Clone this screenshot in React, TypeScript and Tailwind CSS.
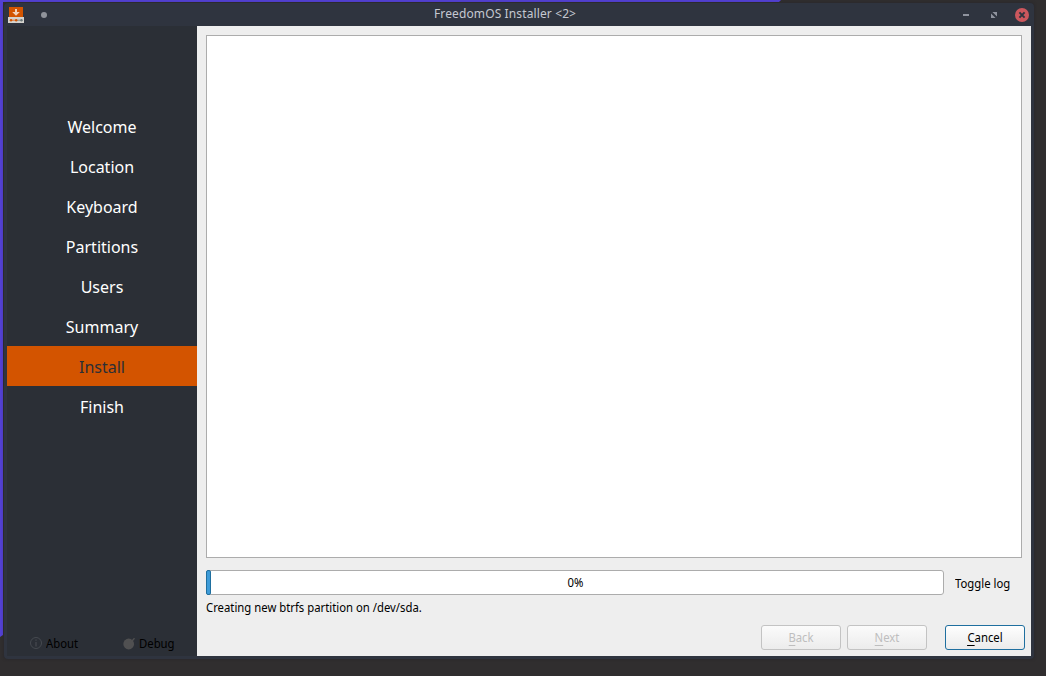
const steps = ['Welcome', 'Location', 'Keyboard', 'Partitions', 'Users', 'Summary', 'Install', 'Finish'];

function InstallerIcon() {
  return (
    <svg className="ml-[4px] mt-[4px] block shrink-0" width="16" height="16" viewBox="0 0 16 16">
      <rect x="1" y="0" width="14" height="11" fill="#d35400" />
      <path d="M7 2h2v3h2.8L8 8.8 4.2 5H7z" fill="#f3d3ba" />
      <rect x="0" y="10" width="16" height="6" fill="#d5d3ce" />
      <path d="M2 13.2h7" stroke="#dd7433" strokeWidth="1" />
      <path d="M9 13.2h5" stroke="#7f8c8d" strokeWidth="1" />
      <circle cx="3" cy="13.2" r="1.2" fill="#d35400" />
      <circle cx="8.2" cy="13.2" r="1.2" fill="#d35400" />
      <circle cx="13.5" cy="13.2" r="1.2" fill="#6c7778" />
    </svg>
  );
}

function WindowControls() {
  return (
    <svg className="ml-auto mr-[3px] block shrink-0" width="72" height="23" viewBox="0 0 72 23">
      <rect x="4" y="11" width="6" height="2" fill="#8f939e" />
      <path d="M33.4 9H38v4.6z M32 10.4V15h4.6z" fill="#8f939e" />
      <circle cx="63" cy="12" r="7" fill="#cc575d" />
      <path d="M60.4 9.4l5.2 5.2M65.6 9.4l-5.2 5.2" stroke="#2f343f" strokeWidth="2" />
    </svg>
  );
}

function Button({ label, active = false }: { label: string; active?: boolean }) {
  return (
    <button
      className={
        active
          ? 'h-[25px] w-[80px] rounded-[3px] border border-[#1f6f9f] bg-linear-to-b from-[#fefefe] to-[#ebebeb] text-black'
          : 'h-[25px] w-[80px] rounded-[3px] border border-[#c3c3c3] bg-linear-to-b from-[#fbfbfb] to-[#ececec] text-[#bebebe]'
      }
    >
      <span className="block scale-x-[0.943] leading-[23px]">
        <span className="inline-block h-[18px] border-b border-current leading-[20px]">{label[0]}</span>
        {label.slice(1)}
      </span>
    </button>
  );
}

export default function App() {
  return (
    <div className="relative h-[676px] w-[1046px] overflow-hidden bg-[#302e2f] pl-[4px] pt-[3px] font-['Noto_Sans',sans-serif] text-[12px]">
      <div className="absolute left-0 top-0 h-[637px] w-[781px] rounded-br-[3px] bg-[#5341d4] [clip-path:polygon(0_0,100%_0,779px_2px,3px_2px,3px_635px,0_637px)]" />
      <div className="relative flex h-[656px] w-[1030px] flex-col rounded-[4px] bg-[#2f343f] shadow-[0_0_3px_0px_rgba(30,30,40,0.5)]">
        <header className="relative flex h-[23px] shrink-0">
          <InstallerIcon />
          <div className="ml-[17px] mt-[9px] h-[6px] w-[6px] rounded-full bg-[#90939b]" />
          <h1 className="absolute left-[430px] top-0 whitespace-nowrap text-[12px] leading-[21px] tracking-[0.12px] text-[#c5c8d1]">
            FreedomOS Installer &lt;2&gt;
          </h1>
          <WindowControls />
        </header>
        <div className="mx-[3px] flex h-[630px]">
          <aside className="flex w-[190px] flex-col bg-[#2b2f36] pt-[80px]">
            <nav>
              {steps.map((s) => (
                <div
                  key={s}
                  className={
                    s === 'Install'
                      ? 'h-[40px] bg-[#d35400] text-center text-[16px] leading-[42px] text-[#2b2f36]'
                      : 'h-[40px] text-center text-[16px] leading-[42px] text-white'
                  }
                >
                  {s}
                </div>
              ))}
            </nav>
            <footer className="mb-[3px] mt-auto flex h-[20px] items-center pl-[23px] leading-[20px] text-black">
              <svg width="12" height="12" viewBox="0 0 12 12" fill="none" stroke="#464a50">
                <circle cx="6" cy="6" r="5.5" />
                <path d="M6 2.5v1.3M6 5v4.5" strokeWidth="1.2" />
              </svg>
              <span className="ml-[4px] mt-[2px] w-[77px] origin-left scale-x-[0.943]">About</span>
              <svg width="13" height="13" viewBox="0 0 13 13">
                <circle cx="5.7" cy="7" r="5.4" fill="#505051" />
                <path d="M9 4l2.5-2.8" stroke="#505051" strokeWidth="1.3" />
              </svg>
              <span className="ml-[3px] mt-[2px] origin-left scale-x-[0.943]">Debug</span>
            </footer>
          </aside>
          <main className="flex w-[834px] flex-col bg-[#eeeeee] pl-[9px] pt-[9px] text-black">
            <div className="h-[523px] w-[816px] shrink-0 border border-[#acacac] bg-white" />
            <div className="mt-[12px] flex h-[25px] shrink-0">
              <div className="relative h-[25px] w-[738px] rounded-[3px] border border-[#acacac] bg-white text-center leading-[24px]">
                <div className="absolute -left-px -top-px h-[25px] w-[5px] rounded-[2px] border border-[#1f6f9f] bg-[#3d9bd8]" />
                <span className="inline-block scale-x-[0.943]">0%</span>
              </div>
              <span className="ml-[11px] origin-left scale-x-[0.943] leading-[28px]">Toggle log</span>
            </div>
            <p className="mt-[3px] h-[20px] origin-left scale-x-[0.943] leading-[20px]">Creating new btrfs partition on /dev/sda.</p>
            <div className="mt-[7px] flex pl-[555px]">
              <Button label="Back" />
              <div className="ml-[6px]"><Button label="Next" /></div>
              <div className="ml-[18px]"><Button label="Cancel" active /></div>
            </div>
          </main>
        </div>
      </div>
    </div>
  );
}
